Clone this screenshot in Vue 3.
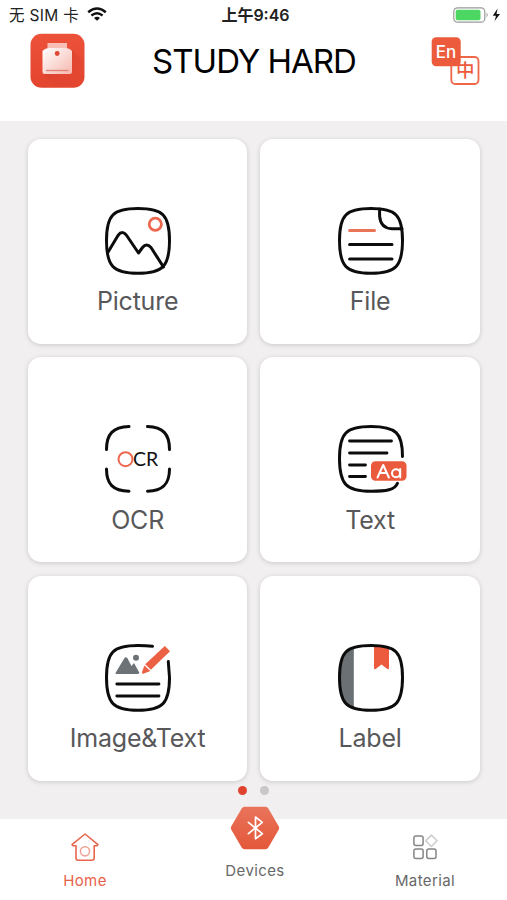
<template>
  <div class="screen">
    <header class="top">
      <div class="status">
        <div class="carrier">
          <span>无 SIM 卡</span>
          <svg class="wifi" width="20" height="14" viewBox="0 0 20 14">
            <path d="M1.2 5.2 Q10 -2.2 18.8 5.2" fill="none" stroke="#111" stroke-width="2.5" />
            <path d="M4.4 8.5 Q10 4 15.6 8.5" fill="none" stroke="#111" stroke-width="2.3" />
            <path d="M7 11 Q10 8.4 13 11 L10 13.8 Z" fill="#111" />
          </svg>
        </div>
        <span class="time">上午9:46</span>
        <div class="power">
          <svg width="49" height="16" viewBox="0 0 49 16">
            <rect x=".8" y=".8" width="31" height="14.4" rx="3.8" fill="#fff" stroke="#999" stroke-width="1.2" />
            <rect x="2.7" y="2.7" width="24.8" height="10.6" rx="1.8" fill="#4cd763" />
            <path d="M33.6 5.6 q2 2.4 0 4.8z" fill="#888" />
            <path d="M44.6 1.6 L39.8 8.8 H43 L41.6 14 L47 6.9 H43.5 Z" fill="#111" />
          </svg>
        </div>
      </div>
      <div class="title-bar">
        <svg class="logo" width="55" height="55" viewBox="0 0 55 55">
          <defs>
            <linearGradient id="logoBg" x1="0" y1="0" x2="0" y2="1">
              <stop offset="0" stop-color="#ed5139" />
              <stop offset="1" stop-color="#e3452f" />
            </linearGradient>
            <linearGradient id="body" x1="0" y1="0" x2="1" y2="1">
              <stop offset="0" stop-color="#fff" />
              <stop offset="1" stop-color="#f6b8ae" />
            </linearGradient>
            <linearGradient id="cast" x1="0" y1="0" x2="1" y2="1">
              <stop offset="0" stop-color="#c53b29" />
              <stop offset="1" stop-color="#e3452f" stop-opacity="0" />
            </linearGradient>
          </defs>
          <rect x=".5" y=".8" width="54" height="54" rx="11" fill="url(#logoBg)" />
          <path d="M42 17 L54 29 V44 Q54 54 44 54 H26 L13 41 Z" fill="url(#cast)" opacity=".75" />
          <rect x="17.5" y="10" width="19.5" height="10" fill="#f8bfb6" />
          <path d="M12.5 18 Q15 15 20 15 H35 Q39.5 15 42 18 V39 Q42 41 40 41 H14.5 Q12.5 41 12.5 39Z" fill="url(#body)" />
          <circle cx="27.2" cy="20.5" r="2.4" fill="#dc4632" />
          <path d="M16 37.5 H38.5" stroke="#df8377" stroke-width="1.3" />
        </svg>
        <h1>STUDY HARD</h1>
        <svg class="lang" width="50" height="49" viewBox="0 0 50 49">
          <rect x="20.3" y="20" width="27.2" height="27" rx="4" fill="#fff" stroke="#ee6748" stroke-width="1.8" />
          <rect x=".7" y=".3" width="29" height="29" rx="4.5" fill="#ec5b3c" />
          <text x="15" y="21" class="en">En</text>
          <text x="34.2" y="39.8" class="zh">中</text>
        </svg>
      </div>
    </header>

    <main>
      <div class="grid">
        <div v-for="item in items" :key="item.key" class="card">
          <svg class="icon" width="74" height="74" viewBox="0 0 72 74">
            <template v-if="item.key === 'picture'">
              <path class="line" :d="frame" />
              <path class="line" d="M5.5 49 L16 31.5 Q20.5 25.5 25 32 L36.5 49 L40.5 43.5 Q44.5 38.5 49 43.5 L61.5 63" />
              <circle cx="53.3" cy="20.3" r="6.1" fill="none" stroke="#ee684f" stroke-width="2.8" />
            </template>
            <template v-else-if="item.key === 'file'">
              <path class="line" :d="frame" />
              <path class="line" d="M44.6 5 V12 Q45.5 24.4 57 24.7 H67" />
              <path class="line accent" d="M14.6 26.5 H39.5" />
              <path class="line" d="M14.6 40.5 H57 M14.6 55 H57" />
            </template>
            <template v-else-if="item.key === 'ocr'">
              <path class="line" d="M27 4.5 C11 5 4.5 12 4.5 27.5 M45.5 4.5 C61 5 67.5 12 67.5 27.5 M4.5 47 C4.5 62 11 69 27 69.3 M67.5 47 C67.5 62 61 69 45.5 69.3" />
              <circle cx="23.5" cy="37.2" r="7" fill="none" stroke="#ee684f" stroke-width="2" />
              <text x="31" y="44" class="scan">CR</text>
            </template>
            <template v-else-if="item.key === 'text'">
              <path class="line" d="M67.5 34.5 C67.6 11 61 4.5 36 4.5 S4.5 11 4.5 36.5 S11 69.3 36 69.3 C51 69.3 60 68 62.5 61.3" />
              <path class="line thin" d="M14.5 19 H56.5 M14.5 31 H52 M14.5 43 H30.5 M14.5 54.5 H30.5" />
              <rect x="36" y="39.3" width="35.5" height="19.5" rx="4.5" fill="#ea5b3d" />
              <path d="M42.5 55.5 L48.2 43 L53.9 55.5 M44.6 51.1 H51.8" class="letter" />
              <circle cx="61" cy="51.2" r="4" class="letter" />
              <path d="M65.2 47 V55.5" class="letter" />
            </template>
            <template v-else-if="item.key === 'imagetext'">
              <path class="line" d="M50.5 5.3 Q44 4.5 36 4.5 C11 4.5 4.5 11 4.5 36.5 S11 69.3 36 69.3 S67.5 62 67.5 36.5 L66.3 20.5" />
              <path d="M13.5 32 L22.5 17 Q24 15.5 25.6 17.5 L29.5 25 L32 22 L37.5 32 Q37 33 35 33 H14.5 Q13 33 13.5 32Z" fill="#6c7275" />
              <circle cx="34" cy="16.7" r="3" fill="#6c7275" />
              <path d="M62.8 5 L68 10.2 L48.9 28.8 L43.2 23.2Z" fill="#ec6044" />
              <path d="M42.4 24.4 L48.3 30 L41.2 32.8 Q39.7 33 40 31Z" fill="#ec6044" />
              <path class="line thin" d="M14.8 43 H57 M14.8 55 H57" />
            </template>
            <template v-else>
              <clipPath id="book"><path :d="frame" /></clipPath>
              <g clip-path="url(#book)">
                <rect x="3" y="3" width="15.8" height="67" fill="#6a7073" />
              </g>
              <path d="M39 5 H54 V27 Q53.7 29 51.7 27.6 L46.5 23.4 L41.3 27.6 Q39.3 29 39 27Z" fill="#ec5b3d" />
              <path class="line" :d="frame" />
            </template>
          </svg>
          <span class="label">{{ item.label }}</span>
        </div>
      </div>
      <div class="dots">
        <i class="active"></i>
        <i></i>
      </div>
    </main>

    <nav>
      <div class="tab active">
        <svg width="30" height="30" viewBox="0 0 30 30">
          <path d="M15 2 L28 12.6 L27 13.8 H24.2 V26 Q24.2 28.2 22 28.2 H8.2 Q6 28.2 6 26 V13.8 H3 L2 12.6Z" fill="none" stroke="#e8664d" stroke-width="1.6" stroke-linejoin="round" />
          <circle cx="15" cy="19.3" r="4.6" fill="none" stroke="#f0a091" stroke-width="1.5" />
        </svg>
        <span>Home</span>
      </div>
      <div class="tab devices">
        <svg width="50" height="44" viewBox="0 0 50 44">
          <defs>
            <linearGradient id="hex" x1="0" y1="0" x2="0" y2="1">
              <stop offset="0" stop-color="#e9745a" />
              <stop offset="1" stop-color="#e4573a" />
            </linearGradient>
          </defs>
          <path d="M14.5 .8 H35.5 Q37.3 .8 38.3 2.5 L48.7 20.2 Q49.6 22 48.7 23.8 L38.3 41.5 Q37.3 43.2 35.5 43.2 H14.5 Q12.7 43.2 11.7 41.5 L1.3 23.8 Q.4 22 1.3 20.2 L11.7 2.5 Q12.7 .8 14.5 .8Z" fill="url(#hex)" />
          <path d="M18.4 16.3 L32.3 27.7 L25.5 32.8 V11 L32.3 16.3 L18.4 27.7" fill="none" stroke="#fff" stroke-width="1.7" stroke-linejoin="round" stroke-linecap="round" />
        </svg>
        <span>Devices</span>
      </div>
      <div class="tab">
        <svg width="30" height="30" viewBox="0 0 30 30">
          <g fill="none" stroke="#858585" stroke-width="1.5">
            <rect x="3.9" y="4.1" width="9.2" height="9.4" rx="2" />
            <rect x="3.9" y="17" width="9.2" height="9.4" rx="2" />
            <rect x="16.8" y="17" width="9.2" height="9.4" rx="2" />
            <path d="M21.4 3.1 L27.1 8.8 L21.4 14.5 L15.7 8.8Z" stroke="#ccc" stroke-linejoin="round" />
          </g>
        </svg>
        <span>Material</span>
      </div>
    </nav>
  </div>
</template>

<script setup>
// outline shared by the rounded icons
const frame = 'M36 4.5 C61 4.5 67.5 11 67.5 36.5 S61 69.3 36 69.3 S4.5 62 4.5 36.5 S11 4.5 36 4.5Z'

const items = [
  { key: 'picture', label: 'Picture' },
  { key: 'file', label: 'File' },
  { key: 'ocr', label: 'OCR' },
  { key: 'text', label: 'Text' },
  { key: 'imagetext', label: 'Image&Text' },
  { key: 'label', label: 'Label' }
]
</script>

<style>
body {
  margin: 0;
  background: #fff;
}
</style>

<style scoped>
.screen {
  width: 507px;
  height: 900px;
  display: flex;
  flex-direction: column;
  overflow: hidden;
  background: #fff;
  font-family: Inter, "Noto Sans CJK SC", sans-serif;
}

.top {
  height: 121px;
}

.status {
  display: grid;
  grid-template-columns: 1fr auto 1fr;
  align-items: center;
  height: 30px;
  padding: 0 5px 0 9px;
  font-size: 15.5px;
  color: #222;
}

.carrier {
  display: flex;
  align-items: center;
  gap: 8px;
  margin-top: -2px;
  letter-spacing: 0.3px;
}

.time {
  margin-top: -2px;
  font-weight: 600;
  font-size: 16px;
}

.power {
  display: flex;
  justify-content: flex-end;
}

.title-bar {
  display: flex;
  justify-content: space-between;
  align-items: flex-start;
  padding: 3px 26px 0 30px;
}

h1 {
  margin: 8px 8px 0 0;
  font-size: 33px;
  line-height: 40px;
  font-weight: 400;
  letter-spacing: -1px;
  color: #000;
}

.lang {
  margin-top: 4px;
}

.en {
  fill: #fff;
  font-size: 17px;
  font-weight: 500;
  text-anchor: middle;
}

.zh {
  fill: #ec5b3c;
  font-size: 18.5px;
  font-weight: 500;
  font-family: "Noto Sans CJK SC", sans-serif;
  text-anchor: middle;
}

main {
  height: 698px;
  background: #f1efef;
}

.grid {
  display: grid;
  grid-template-columns: 219.5px 219.5px;
  grid-auto-rows: 205px;
  gap: 13.7px 13px;
  padding: 17.5px 0 0 27.9px;
}

.card {
  display: flex;
  flex-direction: column;
  align-items: center;
  background: #fff;
  border-radius: 13px;
  box-shadow: 0 1px 5px rgba(0, 0, 0, 0.16);
}

.icon {
  margin: 65px 0 0 1px;
}

.line {
  fill: none;
  stroke: #0c0c0c;
  stroke-width: 3;
  stroke-linecap: round;
  stroke-linejoin: round;
}

.thin {
  stroke-width: 2.8;
}

.accent {
  stroke: #e97458;
}

.letter {
  fill: none;
  stroke: #fff;
  stroke-width: 2;
  stroke-linecap: round;
  stroke-linejoin: round;
}

.scan {
  fill: #111;
  font-size: 19.5px;
  font-family: Lato, sans-serif;
}

.label {
  margin-top: 7.5px;
  font-size: 25px;
  line-height: 32px;
  letter-spacing: -0.2px;
  color: #58585a;
}

.dots {
  display: flex;
  justify-content: center;
  gap: 13px;
  margin-top: 5px;
}

.dots i {
  width: 9px;
  height: 9px;
  border-radius: 50%;
  background: #c8c8c8;
}

.dots .active {
  background: #df4330;
}

nav {
  display: grid;
  grid-template-columns: repeat(3, 170px);
  height: 81px;
}

.tab {
  display: flex;
  flex-direction: column;
  align-items: center;
  padding-top: 13px;
  font-size: 15px;
  line-height: 20px;
  letter-spacing: 0.4px;
  color: #686868;
}

.tab span {
  margin-top: 9px;
}

.tab.active {
  color: #e8604a;
}

.devices {
  padding: 0;
  margin-top: -13px;
}

.devices span {
  margin-top: 11px;
}
</style>
